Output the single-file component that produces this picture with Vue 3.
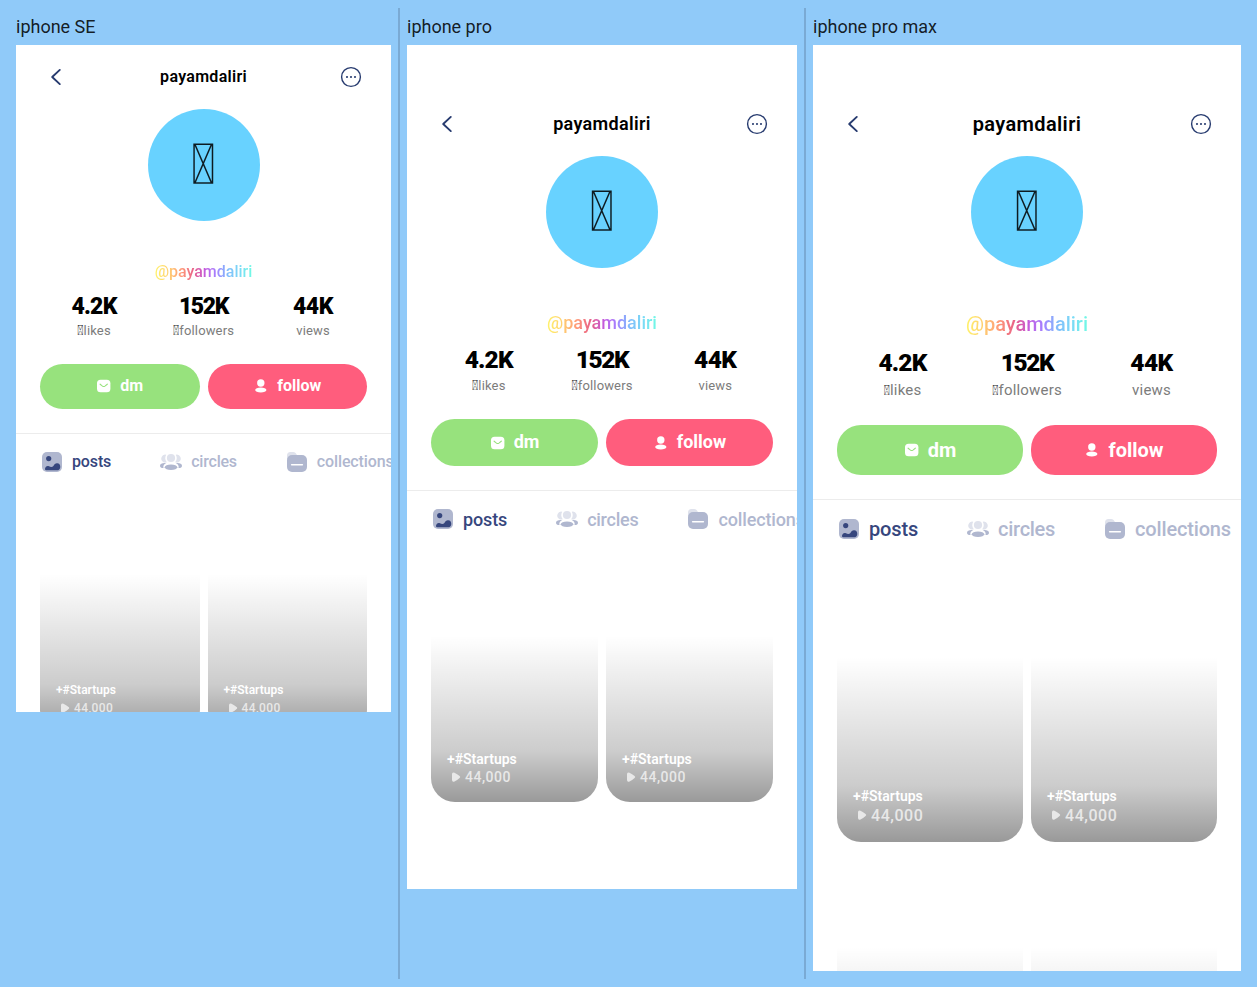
<script setup>
const phones = [
  { name: 'iphone SE', size: 'se' },
  { name: 'iphone pro', size: 'pro' },
  { name: 'iphone pro max', size: 'max' },
]
const stats = [
  { value: '4.2K', label: 'likes', glyph: '\uE000', cls: 'first' },
  { value: '152K', label: 'followers', glyph: '\uE000', cls: 'tight' },
  { value: '44K', label: 'views', glyph: '', cls: '' },
]
</script>

<template>
  <main class="board">
    <section v-for="phone in phones" :key="phone.size" class="column" :class="phone.size">
      <h2 class="device">{{ phone.name }}</h2>
      <div class="screen">
        <header class="top">
          <svg width="24" height="24" viewBox="0 0 24 24" fill="none" stroke="#273b6f" stroke-width="1.9" stroke-linecap="round" stroke-linejoin="round">
            <path d="M15.8 4.9 8.2 12l7.6 7.1" />
          </svg>
          <h1 class="name">payamdaliri</h1>
          <svg width="24" height="24" viewBox="0 0 24 24">
            <circle cx="12" cy="12" r="9.4" fill="none" stroke="#273b6f" stroke-width="1.4" />
            <g fill="#273b6f">
              <circle cx="8" cy="12" r="1.05" />
              <circle cx="12" cy="12" r="1.05" />
              <circle cx="16" cy="12" r="1.05" />
            </g>
          </svg>
        </header>

        <div class="avatar">&#xE000;</div>
        <div class="handle"><span>@payamdaliri</span></div>

        <div class="stats">
          <div v-for="s in stats" :key="s.label" class="stat" :class="s.cls">
            <strong>{{ s.value }}</strong>
            <span class="label"><i v-if="s.glyph">{{ s.glyph }}</i>{{ s.label }}</span>
          </div>
        </div>

        <div class="actions">
          <button class="btn dm">
            <svg width="16" height="16" viewBox="0 0 16 16">
              <rect x="1" y="1.7" width="13.4" height="12.6" rx="3.6" fill="#fff" />
              <path d="M4.1 6.2 6.5 8.1Q7.7 9 8.9 8.1L11.3 6.2" fill="none" stroke="#97e27d" stroke-width="1.1" stroke-linecap="round" />
            </svg>
            <span>dm</span>
          </button>
          <button class="btn follow">
            <svg width="16" height="16" viewBox="0 0 16 16" fill="#fff">
              <circle cx="7.8" cy="5" r="3.7" />
              <ellipse cx="7.800" cy="12.100" rx="5.600" ry="2.500" />
            </svg>
            <span>follow</span>
          </button>
        </div>

        <nav class="tabs">
          <a class="tab active">
            <svg width="24" height="24" viewBox="0 0 24 24">
              <rect x="2" y="2" width="20" height="20" rx="5" fill="#b0b7cf" />
              <circle cx="8.7" cy="8.6" r="2.6" fill="#36467d" />
              <path d="M5 18.8C5.300 16.600 7.200 15.300 9 16.300C10.800 17.400 12.400 17.200 13.400 15.900C14.500 14.400 15.200 13.500 16.900 13.300C19 13.100 20.300 14.600 20.300 16.900Q20 20.300 16.800 20.300H6.200Q4.900 20.300 5 18.800Z" fill="#36467d" />
            </svg>
            <span>posts</span>
          </a>
          <a class="tab circles">
            <svg width="24" height="24" viewBox="0 0 24 24">
              <g fill="#dfe2ec">
                <path d="M7.200 4.700A4 4 0 0 0 4.200 12Q5.800 12.900 7.800 12.300Q5 8.600 7.200 4.700Z" />
                <path d="M16.800 4.700A4 4 0 0 1 19.800 12Q18.200 12.900 16.200 12.300Q19 8.600 16.800 4.700Z" />
                <circle cx="12" cy="8" r="4.100" />
              </g>
              <g fill="#b0b7cf">
                <ellipse cx="12" cy="17.300" rx="6.300" ry="2.800" />
                <path d="M7.200 13.100C4 12.500 1 13.600 1 15.700Q1 17.800 4.500 18.100Q3.600 15.200 7.200 13.100Z" />
                <path d="M16.800 13.100C20 12.500 23 13.600 23 15.700Q23 17.800 19.500 18.100Q20.400 15.200 16.800 13.100Z" />
              </g>
            </svg>
            <span>circles</span>
          </a>
          <a class="tab collections">
            <svg width="24" height="24" viewBox="0 0 24 24">
              <path d="M2 9V5.500Q2 2 5.500 2H8.200Q10.300 2 11.200 3.700L12.200 5.500V9Z" fill="#dfe2ec" />
              <rect x="2" y="5" width="20" height="17" rx="5" fill="#b0b7cf" />
              <path d="M6.600 14.700H17.400" stroke="#fff" stroke-width="1.500" stroke-linecap="round" />
            </svg>
            <span>collections</span>
          </a>
        </nav>

        <div class="grid">
          <article v-for="n in 4" :key="n" class="card">
            <div class="tag">+#Startups</div>
            <div class="plays">
              <svg width="16" height="16" viewBox="0 0 16 16" fill="#e8e8e8">
                <path d="M5 5.300Q5 2.700 7.500 3.700Q10.200 5 12.600 7Q13.800 8 12.600 9Q10.200 11.200 7.500 12.400Q5 13.300 5 10.700Z" />
              </svg>
              <span>44,000</span>
            </div>
          </article>
        </div>
      </div>
    </section>
  </main>
</template>

<style>
body {
  margin: 0;
  background: #90caf9;
}
</style>

<style scoped>
.board {
  display: flex;
  box-sizing: border-box;
  width: 1257px;
  height: 987px;
  padding: 8px;
  background: #90caf9;
  font-family: Roboto, sans-serif;
  overflow: hidden;
}
.column {
  box-sizing: border-box;
  flex: none;
  padding: 0 7px;
}
.column:first-child {
  padding-left: 8px;
}
.column + .column {
  border-left: 2px solid #7aaad4;
}
.device {
  margin: 0;
  height: 37px;
  line-height: 38px;
  font-size: 18px;
  font-weight: 400;
  color: rgba(0, 0, 0, 0.87);
}
.screen {
  box-sizing: border-box;
  width: var(--w);
  height: var(--h);
  padding-top: var(--inset);
  background: #fff;
  overflow: hidden;
}
.se {
  --w: 375px; --h: 667px; --inset: 0px;
  --fs: 16px; --num: 23px; --small: 13px; --tag: 12px; --count: 12px; --count-h: 18px;
  --handle-top: 39px; --num-top: 8px; --label-top: -1px; --pitch: 109.5px;
  --btn-top: 22.5px; --btn-h: 45px; --tabs-h: 57.5px; --tabs-line: 56px;
}
.pro {
  --w: 390px; --h: 844px; --inset: 47px;
  --fs: 18px; --num: 24.5px; --small: 13px; --tag: 14px; --count: 14px; --count-h: 18px;
  --handle-top: 43px; --num-top: 10px; --label-top: 1px; --pitch: 113.25px;
  --btn-top: 23px; --btn-h: 47px; --tabs-h: 58px; --tabs-line: 56px;
}
.max {
  --w: 428px; --h: 926px; --inset: 47px;
  --fs: 20px; --num: 24.5px; --small: 15px; --tag: 14px; --count: 16px; --count-h: 21px;
  --handle-top: 44px; --num-top: 12px; --label-top: 2px; --pitch: 124.5px;
  --btn-top: 25px; --btn-h: 50px; --tabs-h: 59.8px; --tabs-line: 58px;
}
.top {
  display: flex;
  align-items: center;
  justify-content: space-between;
  box-sizing: border-box;
  height: 64px;
  padding: 0 28px;
}
.name {
  margin: 0;
  font-size: var(--fs);
  line-height: 24px;
  font-weight: 600;
  letter-spacing: 0.018em;
  color: #000;
}
.avatar {
  width: 112px;
  height: 112px;
  margin: 0 auto;
  border-radius: 50%;
  background: #68d2ff;
  color: rgba(0, 0, 0, 0.87);
  font-size: 57px;
  font-weight: 500;
  line-height: 111px;
  text-align: center;
}
.handle {
  margin-top: var(--handle-top);
  height: 24px;
  line-height: 24px;
  text-align: center;
  font-size: var(--fs);
  font-weight: 500;
}
.handle span {
  display: inline-block;
  color: transparent;
  background: linear-gradient(90deg, #fff36b 0%, #ffd070 14%, #ff9a78 27%, #e86088 40%, #c25be0 52%, #a580ff 63%, #82bcfb 75%, #7adcf5 88%, #70fae4 100%);
  background-clip: text;
  -webkit-background-clip: text;
}
.stats {
  display: grid;
  grid-template-columns: repeat(3, var(--pitch));
  justify-content: center;
  margin-top: var(--num-top);
}
.stat {
  display: flex;
  flex-direction: column;
  align-items: center;
}
.stat strong {
  height: 30px;
  line-height: 30px;
  font-size: var(--num);
  font-weight: 900;
  letter-spacing: -0.02em;
  color: #000;
}
.stat.first strong {
  letter-spacing: -0.035em;
}
.stat.tight strong {
  letter-spacing: -0.06em;
}
.label {
  margin-top: var(--label-top);
  height: 20px;
  line-height: 20px;
  font-size: var(--small);
  letter-spacing: 0.012em;
  color: #7c7c7c;
  white-space: nowrap;
}
.label i {
  font-style: normal;
  font-size: 14px;
  line-height: 0;
  color: #222;
}
.actions {
  display: grid;
  grid-template-columns: 1fr 1fr;
  gap: 8px;
  margin-top: var(--btn-top);
  padding: 0 24px 24px;
  border-bottom: 1px solid #ececec;
}
.btn {
  display: flex;
  align-items: center;
  justify-content: center;
  gap: 8px;
  height: var(--btn-h);
  padding: 0;
  border: 0;
  border-radius: 24px;
  color: #fff;
  font-family: inherit;
  font-size: var(--fs);
  font-weight: 700;
}
.btn span {
  line-height: 24px;
  margin-top: -1px;
}
.dm { background: #97e27d; }
.follow { background: #ff5d7d; }
.tabs {
  display: flex;
  gap: 48px;
  height: var(--tabs-h);
  padding-left: 24px;
}
.tab {
  display: flex;
  flex: none;
  align-items: center;
  gap: 8px;
  height: var(--tabs-line);
  font-size: var(--fs);
  color: #b0b7cf;
}
.tab.active {
  color: #36467d;
  font-weight: 500;
  letter-spacing: -0.008em;
}
.tab.circles {
  font-weight: 500;
  letter-spacing: -0.014em;
}
.tab.collections {
  font-weight: 500;
  letter-spacing: -0.008em;
}
.grid {
  display: grid;
  grid-template-columns: 1fr 1fr;
  gap: 8px;
  padding: 0 24px;
}
.card {
  display: flex;
  flex-direction: column;
  justify-content: flex-end;
  box-sizing: border-box;
  aspect-ratio: 1 / 1.516;
  padding: 16px;
  border-radius: 24px;
  background: linear-gradient(180deg, transparent 34.3%, rgba(0, 0, 0, 0.2) 80%, rgba(0, 0, 0, 0.4) 100%);
  color: #fff;
}
.tag {
  height: 18px;
  line-height: 18px;
  font-size: var(--tag);
  font-weight: 600;
}
.plays {
  display: flex;
  align-items: center;
  gap: 2px;
  height: var(--count-h);
  font-size: var(--count);
  font-weight: 500;
  letter-spacing: 0.035em;
  color: #e8e8e8;
}
</style>
